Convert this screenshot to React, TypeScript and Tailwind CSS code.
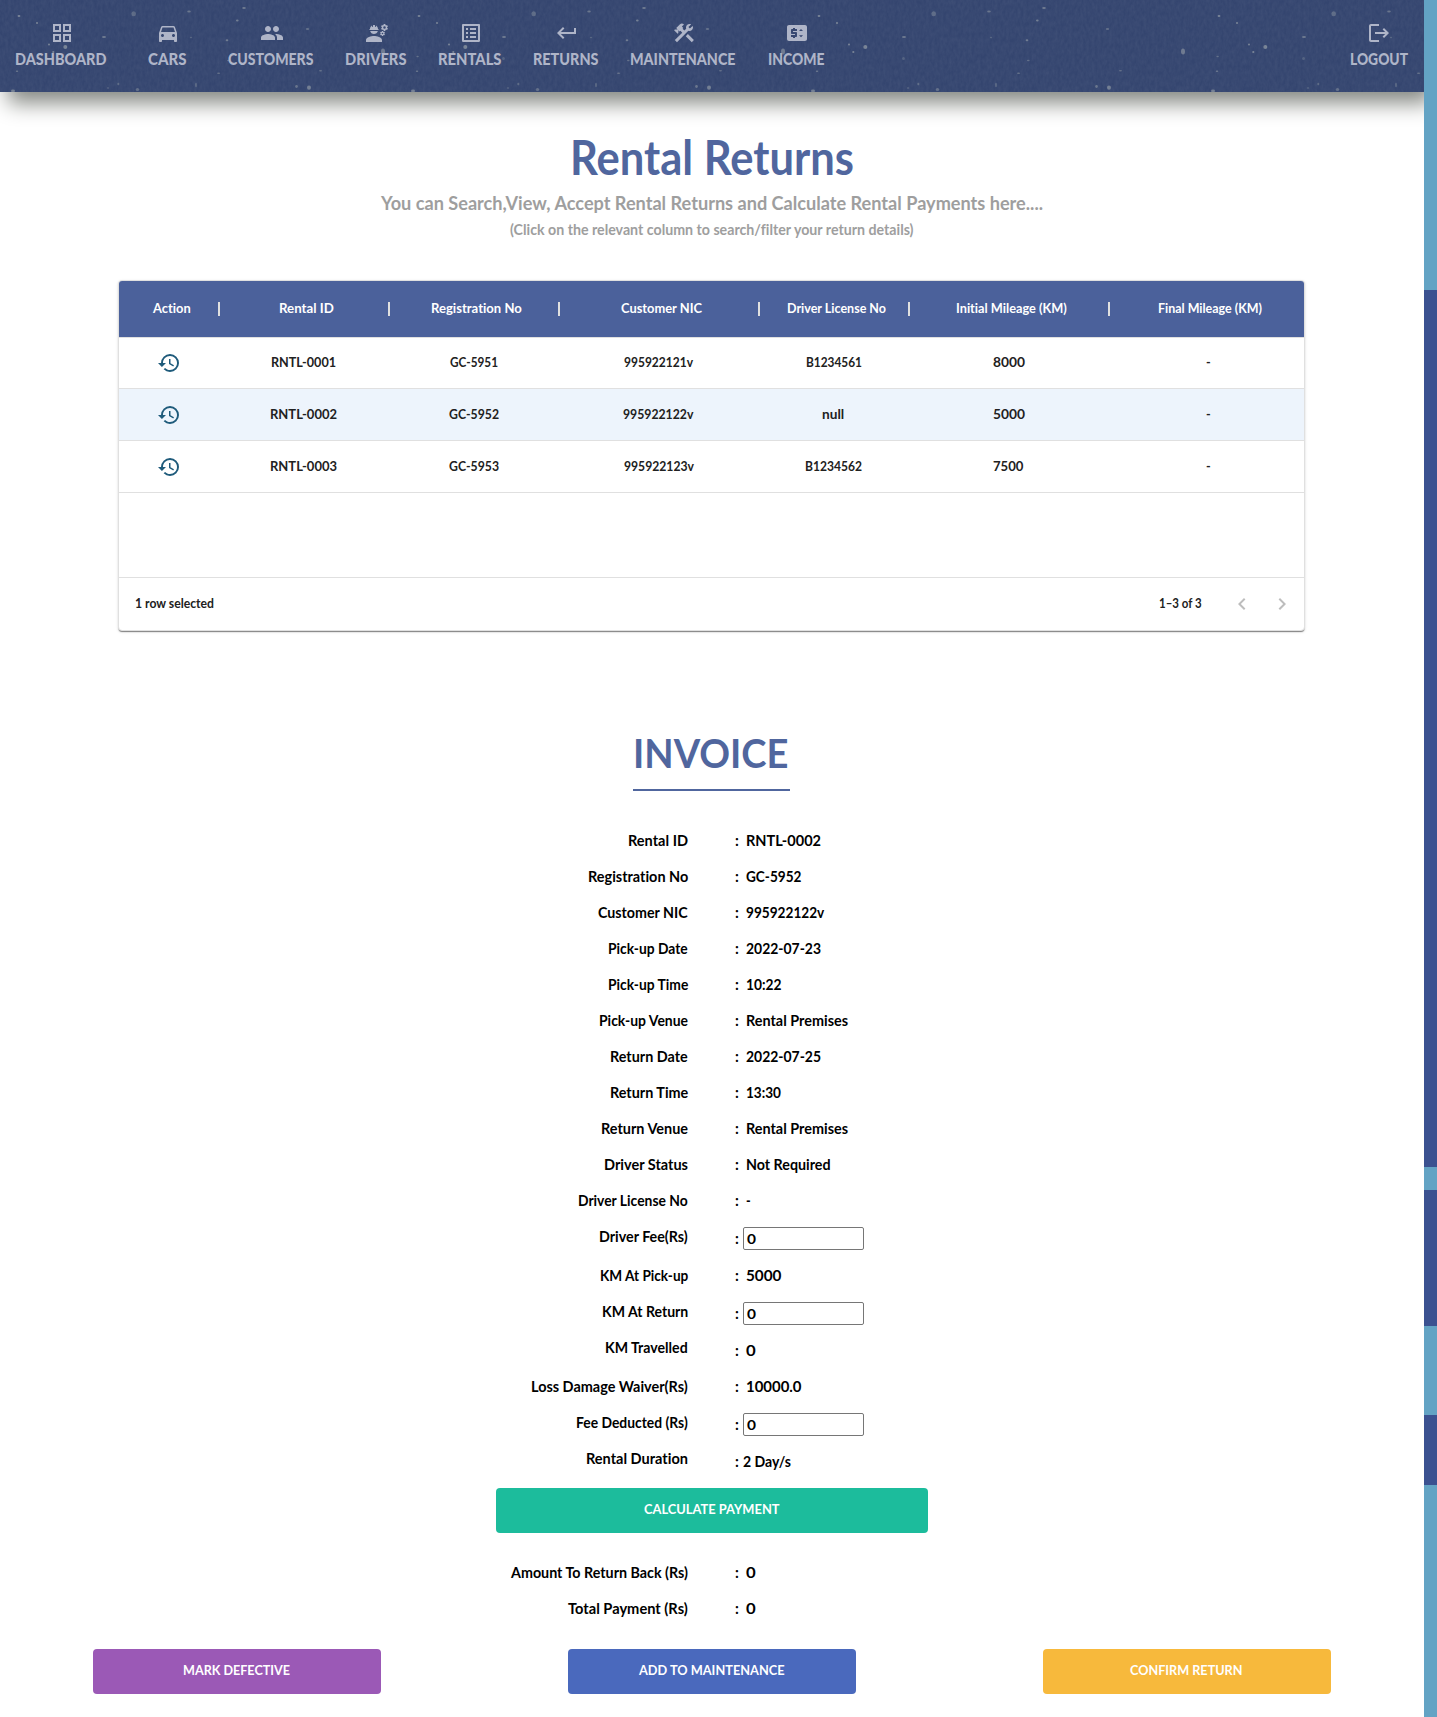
import { useLayoutEffect, useRef } from "react";
import type { ReactNode } from "react";
import type { IconType } from "react-icons";
import {
  MdConstruction,
  MdDirectionsCar,
  MdEngineering,
  MdGridView,
  MdHistory,
  MdKeyboardArrowLeft,
  MdKeyboardArrowRight,
  MdKeyboardReturn,
  MdListAlt,
  MdLogout,
  MdPeople,
  MdPriceChange,
} from "react-icons/md";

/** Condenses a line of text horizontally so that it fills the given width. */
function Fit({ w, children }: { w: number; children: ReactNode }) {
  const ref = useRef<HTMLSpanElement>(null);
  useLayoutEffect(() => {
    const el = ref.current;
    if (!el) return;
    el.style.transform = "none";
    const natural = el.getBoundingClientRect().width;
    el.style.transform = `translateX(-1px) scaleX(${(w + 1) / natural})`;
  }, [w, children]);
  return (
    <span className="inline-block text-left whitespace-nowrap" style={{ width: w }}>
      <span ref={ref} className="inline-block origin-left">
        {children}
      </span>
    </span>
  );
}

const tabs: [string, number, IconType][] = [
  ["DASHBOARD", 90.5, MdGridView],
  ["CARS", 37.5, MdDirectionsCar],
  ["CUSTOMERS", 84.5, MdPeople],
  ["DRIVERS", 60.5, MdEngineering],
  ["RENTALS", 62.5, MdListAlt],
  ["RETURNS", 64.5, MdKeyboardReturn],
  ["MAINTENANCE", 104.5, MdConstruction],
  ["INCOME", 55.5, MdPriceChange],
];

function Tab({ label, w, Icon }: { label: string; w: number; Icon: IconType }) {
  return (
    <button className="flex min-w-[90px] flex-col items-center px-[16.25px] pt-[21px]">
      <Icon size={24} />
      <span className="mt-1 text-[16px] leading-5 font-black">
        <Fit w={w}>{label}</Fit>
      </span>
    </button>
  );
}

const flecks: [number, number, number, number, number][] = [
  [19, 16, 1.4, 0.9, 0.6],
  [37, 23, 1, 1, 0.6],
  [133.7, 13.7, 2.3, 2.5, 0.35],
  [189, 11.5, 1.8, 0.9, 0.45],
  [244, 8, 1.8, 0.9, 0.5],
  [237.3, 20.5, 1.3, 1, 0.55],
  [104, 37, 2, 1, 0.5],
  [49, 44.5, 1, 1, 0.6],
  [65.3, 47, 2, 2, 0.6],
  [53.3, 52, 1.1, 1.1, 0.6],
  [227, 40.3, 1.3, 1, 0.5],
  [307.5, 29, 1.7, 0.9, 0.4],
  [191, 37.5, 1.2, 0.7, 0.3],
  [17, 71.3, 1.2, 0.8, 0.5],
  [17.6, 56.5, 1.2, 0.8, 0.4],
  [103.5, 58.5, 1.4, 1.5, 0.25],
  [218.6, 73.3, 1.6, 0.7, 0.4],
  [228.3, 60.5, 1.3, 0.8, 0.4],
  [118.3, 84, 1, 1.3, 0.35],
  [108, 88, 1.2, 0.7, 0.3],
  [137.5, 89.5, 1.7, 1.5, 0.4],
  [196, 85, 0.9, 2.3, 0.35],
  [296.5, 86.5, 1.3, 1.4, 0.45],
  [309, 87.6, 2, 2.2, 0.55],
  [320.5, 70.8, 1.5, 0.7, 0.4],
  [383, 51.6, 2, 3, 0.5],
  [13, 91, 2, 1.4, 0.55],
];

/** Speckled denim-like surface behind the navigation tabs. */
function NavTexture() {
  return (
    <svg className="absolute inset-0 h-full w-full" aria-hidden="true">
      <defs>
        <filter id="grain" x="0" y="0" width="100%" height="100%">
          <feTurbulence type="fractalNoise" baseFrequency="0.35 0.18" numOctaves={3} seed={4} stitchTiles="stitch" />
          <feColorMatrix values="0 0 0 0 1  0 0 0 0 1  0 0 0 0 1  0.5 0 0 0 -0.1" />
        </filter>
        <pattern id="flecks" width="400" height="400" patternUnits="userSpaceOnUse">
          {flecks.map(([x, y, rx, ry, o]) => (
            <ellipse key={`${x}-${y}`} cx={x} cy={y} rx={rx} ry={ry} fill="#b9bfba" opacity={o * 0.85} />
          ))}
        </pattern>
      </defs>
      <rect width="100%" height="100%" fill="#34456f" />
      <rect width="100%" height="100%" filter="url(#grain)" opacity="0.14" />
      <rect width="100%" height="100%" fill="url(#flecks)" />
    </svg>
  );
}

const columns: [string, number][] = [
  ["Action", 36.7],
  ["Rental ID", 53.9],
  ["Registration No", 89.8],
  ["Customer NIC", 80],
  ["Driver License No", 98],
  ["Initial Mileage (KM)", 109.8],
  ["Final Mileage (KM)", 102.9],
];

const rows: { selected?: boolean; cells: [string, number][] }[] = [
  { cells: [["RNTL-0001", 64], ["GC-5951", 47], ["995922121v", 68], ["B1234561", 55], ["8000", 31], ["-", 3.7]] },
  { selected: true, cells: [["RNTL-0002", 66], ["GC-5952", 49], ["995922122v", 69.4], ["null", 21.2], ["5000", 31], ["-", 3.7]] },
  { cells: [["RNTL-0003", 66], ["GC-5953", 49], ["995922123v", 69], ["B1234562", 56], ["7500", 29.5], ["-", 3.7]] },
];

const GRID = "grid grid-cols-[100px_170px_170px_200px_150px_200px_195px]";

function ReturnsTable() {
  return (
    <section className="mt-[39px] ml-[118px] w-[1187px] overflow-hidden rounded-[4px] border border-[#e0e0e0] bg-white text-[13px] font-bold shadow-[0_2px_1px_-1px_rgba(0,0,0,0.35),0_1px_1px_rgba(0,0,0,0.14),0_1px_3px_rgba(0,0,0,0.12)]">
      <div className={`${GRID} h-[57px] border-b border-[#e0e0e0] bg-[#4b619b] text-white`}>
        {columns.map(([label, w], i) => (
          <div
            key={label}
            className={`relative flex items-center justify-center pb-px ${i === columns.length - 1 ? "pl-[8px]" : "pl-[6px]"}`}
          >
            <Fit w={w}>{label}</Fit>
            {i < columns.length - 1 && (
              <span className="absolute top-[21px] -right-px h-[14px] w-[2px] bg-[#e0e0e0]" />
            )}
          </div>
        ))}
      </div>
      {rows.map((row, r) => (
        <div
          key={row.cells[0][0]}
          className={`${GRID} border-b border-[#e0e0e0] text-[#212121] ${r === 0 ? "h-[51px]" : "h-[52px]"} ${row.selected ? "bg-[#edf4fc]" : ""}`}
        >
          <div className="flex items-center justify-center text-[#1f5b7b]">
            <MdHistory size={24} />
          </div>
          {row.cells.map(([text, w], i) => (
            <div key={i} className={`flex items-center justify-center ${i === 5 ? "-mr-[5px]" : ""}`}>
              <Fit w={w}>{text}</Fit>
            </div>
          ))}
        </div>
      ))}
      <div className="h-[84px]" />
      <div className="flex h-[53px] items-center justify-between border-t border-[#e0e0e0] pb-px pl-[17px] text-[#212121]">
        <span className="pt-px">
          <Fit w={78}>1 row selected</Fit>
        </span>
        <div className="flex items-center pr-[10px]">
          <span className="mr-7 pt-px">
            <Fit w={41.6}>1–3 of 3</Fit>
          </span>
          <button className="mr-4 text-[#bdbdbd]">
            <MdKeyboardArrowLeft size={24} />
          </button>
          <button className="text-[#bdbdbd]">
            <MdKeyboardArrowRight size={24} />
          </button>
        </div>
      </div>
    </section>
  );
}

type Line = {
  label: string;
  lw: number;
  value: string;
  vw: number;
  input?: boolean;
  tall?: boolean;
  low?: boolean;
  tight?: boolean;
};

const details: Line[] = [
  { label: "Rental ID", lw: 59, value: "RNTL-0002", vw: 74 },
  { label: "Registration No", lw: 99.3, value: "GC-5952", vw: 54.5 },
  { label: "Customer NIC", lw: 88.7, value: "995922122v", vw: 77.3 },
  { label: "Pick-up Date", lw: 78.7, value: "2022-07-23", vw: 74 },
  { label: "Pick-up Time", lw: 79.3, value: "10:22", vw: 34.5 },
  { label: "Pick-up Venue", lw: 88, value: "Rental Premises", vw: 101 },
  { label: "Return Date", lw: 76.7, value: "2022-07-25", vw: 74 },
  { label: "Return Time", lw: 77.3, value: "13:30", vw: 34 },
  { label: "Return Venue", lw: 86, value: "Rental Premises", vw: 101 },
  { label: "Driver Status", lw: 83, value: "Not Required", vw: 83.5 },
  { label: "Driver License No", lw: 108.7, value: "-", vw: 3.7 },
  { label: "Driver Fee(Rs)", lw: 87.7, value: "0", vw: 8, input: true, tall: true },
  { label: "KM At Pick-up", lw: 87.3, value: "5000", vw: 34.5 },
  { label: "KM At Return", lw: 85.3, value: "0", vw: 8, input: true },
  { label: "KM Travelled", lw: 81.7, value: "0", vw: 8.7, tall: true, low: true },
  { label: "Loss Damage Waiver(Rs)", lw: 155.7, value: "10000.0", vw: 54.5 },
  { label: "Fee Deducted (Rs)", lw: 110.7, value: "0", vw: 8, input: true },
  { label: "Rental Duration", lw: 101, value: "2 Day/s", vw: 47, low: true, tight: true },
];

const totals: Line[] = [
  { label: "Amount To Return Back (Rs)", lw: 176, value: "0", vw: 8.7 },
  { label: "Total Payment (Rs)", lw: 118.8, value: "0", vw: 8.7 },
];

function DetailLine({ line }: { line: Line }) {
  return (
    <div className={`flex text-[15px] leading-9 font-bold text-black ${line.tall ? "h-[39px]" : "h-9"}`}>
      <div className="flex w-[688px] justify-end">
        <Fit w={line.lw}>{line.label}</Fit>
      </div>
      <div className={`ml-[47px] flex ${line.low ? "pt-[3px]" : line.input ? "pt-[2px]" : ""}`}>
        <span className="w-2">:</span>
        {line.input ? (
          <div className="mt-[7px] h-[23px] w-[121px] rounded-[2px] border border-[#767676] bg-white pl-[4px] text-[14px] leading-[21px]">
            <Fit w={line.vw}>{line.value}</Fit>
          </div>
        ) : (
          <span className={line.tight ? "ml-px" : "ml-[4px]"}>
            <Fit w={line.vw}>{line.value}</Fit>
          </span>
        )}
      </div>
    </div>
  );
}

function Action({ label, w, className }: { label: string; w: number; className: string }) {
  return (
    <button className={`h-[45px] rounded-[4px] pb-px text-center text-[12.5px] font-bold text-white ${className}`}>
      <Fit w={w}>{label}</Fit>
    </button>
  );
}

export default function App() {
  return (
    <div className="flex h-[1717px] w-[1437px] overflow-hidden bg-white font-['Lato',sans-serif] [font-variant-ligatures:none]">
      <main className="flex w-[1424px] flex-col overflow-hidden">
        <nav className="relative h-[92px] shrink-0 text-[#afb5c8] shadow-[8px_11px_20px_#858883]">
          <NavTexture />
          <div className="relative flex">
            {tabs.map(([label, w, Icon]) => (
              <Tab key={label} label={label} w={w} Icon={Icon} />
            ))}
            <div className="ml-auto">
              <Tab label="LOGOUT" w={57} Icon={MdLogout} />
            </div>
          </div>
        </nav>

        <header className="mt-[35px] flex flex-col items-center font-bold">
          <h1 className="text-[47px] leading-[60px] text-[#50669e]">
            <Fit w={283}>Rental Returns</Fit>
          </h1>
          <p className="mt-px text-[19px] leading-[30px] text-[#9e9e9e]">
            <Fit w={661}>You can Search,View, Accept Rental Returns and Calculate Rental Payments here....</Fit>
          </p>
          <p className="-mt-px text-[15px] leading-6 text-[#9e9e9e]">
            <Fit w={402.5}>(Click on the relevant column to search/filter your return details)</Fit>
          </p>
        </header>

        <ReturnsTable />

        <section className="mt-[84px]">
          <h2 className="ml-[633px] h-[76px] w-[157px] border-b-2 border-[#50669e] text-center text-[41px] leading-[76px] font-bold text-[#50669e]">
            <Fit w={154.5}>INVOICE</Fit>
          </h2>
          <div className="mt-[31px]">
            {details.map((line) => (
              <DetailLine key={line.label} line={line} />
            ))}
          </div>
          <div className="mt-3 flex justify-center">
            <Action label="CALCULATE PAYMENT" w={134.5} className="w-[432px] bg-[#1cbc9c]" />
          </div>
          <div className="mt-[21px]">
            {totals.map((line) => (
              <DetailLine key={line.label} line={line} />
            ))}
          </div>
          <div className="mt-[23px] flex justify-between px-[93px]">
            <Action label="MARK DEFECTIVE" w={106} className="w-[288px] bg-[#9b59b6]" />
            <Action label="ADD TO MAINTENANCE" w={144.5} className="w-[288px] bg-[#4a69bd]" />
            <Action label="CONFIRM RETURN" w={111.5} className="w-[288px] bg-[#f7b93c]" />
          </div>
        </section>
      </main>

      <aside className="flex w-[13px] flex-col bg-[#63a3c4]">
        <div className="mt-[290px] h-[877px] bg-[#3b5190]" />
        <div className="mt-[23px] h-[136px] bg-[#3b5190]" />
        <div className="mt-[89px] h-[70px] bg-[#3b5190]" />
      </aside>
    </div>
  );
}
